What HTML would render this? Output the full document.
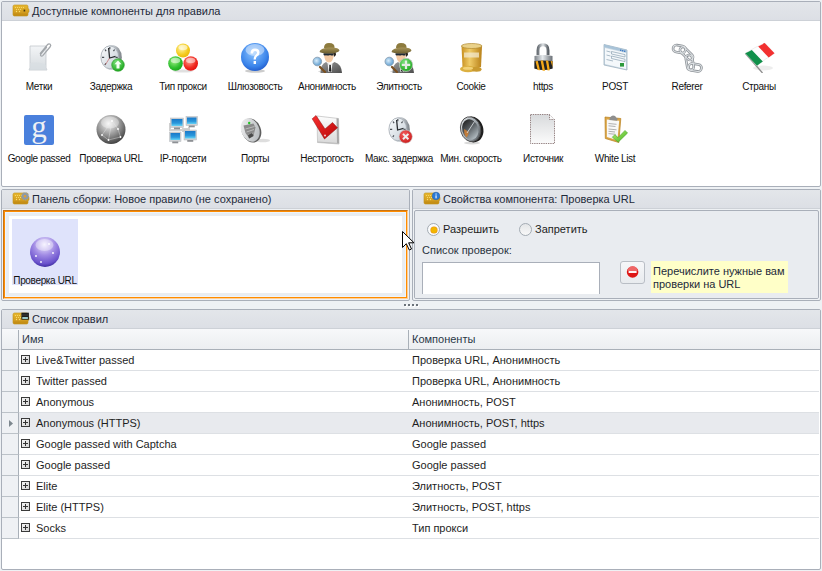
<!DOCTYPE html>
<html><head><meta charset="utf-8">
<style>
*{margin:0;padding:0;box-sizing:border-box}
html,body{width:822px;height:571px;overflow:hidden;background:#eef1f4;font-family:"Liberation Sans",sans-serif;font-size:11px;color:#1e1e1e;position:relative}
.a{position:absolute}
.panel{position:absolute;border:1px solid #a9afb9;border-radius:2px;background:#fff}
.hdr{position:absolute;left:0;right:0;top:0;height:19px;background:linear-gradient(#e3e6ea,#dcdfe5);border-bottom:1px solid #cdd1d7}
.hdr .t{position:absolute;left:30px;top:3px;white-space:nowrap;color:#1e2a3a}
.hdr svg{position:absolute;left:9px;top:0}
.item{position:absolute;width:72px;height:72px}
.item svg{position:absolute;left:20px;top:0}
.item .l{position:absolute;left:-20px;width:112px;text-align:center;top:39.5px;font-size:10px;letter-spacing:-0.35px;white-space:nowrap;color:#111}
.row{position:absolute;left:0;right:1px;height:21px;border-bottom:1px solid #dde0e4;background:#fff}
.row.sel{background:#e8eaee}
.ind{position:absolute;left:0;top:0;width:17px;height:21px;background:#eff1f4;border-right:1px solid #a9b0b8;border-bottom:1px solid #bcc2c8}
.arr{position:absolute;left:6px;top:6px}
.pl{position:absolute;left:19px;top:5px;width:9px;height:9px;border:1px solid #3a3a3a;background:linear-gradient(135deg,#f4f4f4,#d4d4d4)}
.pl:before{content:"";position:absolute;left:1px;top:3px;width:5px;height:1px;background:#333}
.pl:after{content:"";position:absolute;left:3px;top:1px;width:1px;height:5px;background:#333}
.c1{position:absolute;left:34px;top:4px;white-space:nowrap}
.c2{position:absolute;left:410px;top:4px;white-space:nowrap}
.colh{position:absolute;top:19px;left:0;right:0;height:21px;background:linear-gradient(#f7f8fa,#eceef1);border-bottom:1px solid #a9b0b8}
.colh span{position:absolute;top:4px;color:#2a3848;white-space:nowrap}
.radio{position:absolute;width:13px;height:13px;border-radius:50%;border:1px solid #a3abb3;background:#fafbfc}
</style></head><body>

<svg width="0" height="0" style="position:absolute">
<defs>
<linearGradient id="gPaper" x1="0" y1="0" x2="0" y2="1"><stop offset="0" stop-color="#f3f5f7"/><stop offset="1" stop-color="#d5dade"/></linearGradient>
<linearGradient id="gRim" x1="0" y1="0" x2="1" y2="0"><stop offset="0" stop-color="#e8ecef"/><stop offset="0.6" stop-color="#c4c9ce"/><stop offset="1" stop-color="#7c8288"/></linearGradient>
<linearGradient id="gClock" x1="0" y1="0" x2="1" y2="1"><stop offset="0" stop-color="#fafcfd"/><stop offset="1" stop-color="#c5ced6"/></linearGradient>
<radialGradient id="gGreen" cx="0.4" cy="0.3" r="0.8"><stop offset="0" stop-color="#7ee27e"/><stop offset="1" stop-color="#10a010"/></radialGradient>
<radialGradient id="gGreenB" cx="0.4" cy="0.35" r="0.75"><stop offset="0" stop-color="#9aee80"/><stop offset="0.6" stop-color="#30c030"/><stop offset="1" stop-color="#10a010"/></radialGradient>
<radialGradient id="gYellow" cx="0.4" cy="0.35" r="0.75"><stop offset="0" stop-color="#fff4a8"/><stop offset="0.6" stop-color="#f4cc20"/><stop offset="1" stop-color="#eab000"/></radialGradient>
<radialGradient id="gRed" cx="0.4" cy="0.35" r="0.75"><stop offset="0" stop-color="#ff9a8a"/><stop offset="0.6" stop-color="#f02a20"/><stop offset="1" stop-color="#e00808"/></radialGradient>
<radialGradient id="gRedX" cx="0.4" cy="0.35" r="0.75"><stop offset="0" stop-color="#f46060"/><stop offset="1" stop-color="#c81414"/></radialGradient>
<radialGradient id="gBlue" cx="0.45" cy="0.35" r="0.7"><stop offset="0" stop-color="#8cc4ff"/><stop offset="0.7" stop-color="#3a84ea"/><stop offset="1" stop-color="#1e56c8"/></radialGradient>
<radialGradient id="gGray" cx="0.42" cy="0.3" r="0.78"><stop offset="0" stop-color="#f4f4f4"/><stop offset="0.55" stop-color="#8c8c8c"/><stop offset="1" stop-color="#2e2e2e"/></radialGradient>
<radialGradient id="gPurple" cx="0.48" cy="0.25" r="0.8"><stop offset="0" stop-color="#f2eeff"/><stop offset="0.45" stop-color="#a08ae4"/><stop offset="0.8" stop-color="#6a52cc"/><stop offset="1" stop-color="#2a1c8c"/></radialGradient>
<linearGradient id="gSuit" x1="0" y1="0" x2="1" y2="1"><stop offset="0" stop-color="#9a9a9a"/><stop offset="1" stop-color="#4e4e4e"/></linearGradient>
<linearGradient id="gHat" x1="0" y1="0" x2="0" y2="1"><stop offset="0" stop-color="#a8955a"/><stop offset="1" stop-color="#6e6030"/></linearGradient>
<radialGradient id="gLens" cx="0.4" cy="0.4" r="0.7"><stop offset="0" stop-color="#d8ecfa"/><stop offset="1" stop-color="#4a90c8"/></radialGradient>
<linearGradient id="gGold" x1="0" y1="0" x2="1" y2="0"><stop offset="0" stop-color="#c89020"/><stop offset="0.4" stop-color="#f0cc68"/><stop offset="1" stop-color="#b88018"/></linearGradient>
<linearGradient id="gShackle" x1="0" y1="0" x2="1" y2="0"><stop offset="0" stop-color="#6c7278"/><stop offset="0.5" stop-color="#dfe3e6"/><stop offset="1" stop-color="#5c6268"/></linearGradient>
<linearGradient id="gLockBody" x1="0" y1="0" x2="1" y2="0"><stop offset="0" stop-color="#7c8288"/><stop offset="0.45" stop-color="#e6eaed"/><stop offset="1" stop-color="#6a7076"/></linearGradient>
<linearGradient id="gChain" x1="0" y1="0" x2="1" y2="1"><stop offset="0" stop-color="#c8c8c8"/><stop offset="0.5" stop-color="#8a8a8a"/><stop offset="1" stop-color="#b0b0b0"/></linearGradient>
<linearGradient id="gScreen" x1="0" y1="0" x2="0" y2="1"><stop offset="0" stop-color="#1a78c8"/><stop offset="0.6" stop-color="#2a98dc"/><stop offset="1" stop-color="#68d4f6"/></linearGradient>
<linearGradient id="gPort" x1="0" y1="0" x2="1" y2="1"><stop offset="0" stop-color="#f4f4f4"/><stop offset="1" stop-color="#b0b4b8"/></linearGradient>
<linearGradient id="gBox" x1="0" y1="0" x2="0" y2="1"><stop offset="0" stop-color="#fdfdfd"/><stop offset="1" stop-color="#d8d8d8"/></linearGradient>
<linearGradient id="gCheckRed" x1="0" y1="0" x2="1" y2="1"><stop offset="0" stop-color="#f83030"/><stop offset="1" stop-color="#b80808"/></linearGradient>
<linearGradient id="gRing" x1="0" y1="0" x2="1" y2="1"><stop offset="0" stop-color="#e8ecee"/><stop offset="0.6" stop-color="#9aa2a8"/><stop offset="1" stop-color="#3a3e42"/></linearGradient>
<linearGradient id="gGauge" x1="0.3" y1="0" x2="0.7" y2="1"><stop offset="0" stop-color="#222"/><stop offset="0.45" stop-color="#5a6064"/><stop offset="1" stop-color="#b8c2c8"/></linearGradient>
<linearGradient id="gPage" x1="0" y1="0" x2="0" y2="1"><stop offset="0" stop-color="#d8dadc"/><stop offset="1" stop-color="#fbfbfb"/></linearGradient>
<linearGradient id="gGreenChk" x1="0" y1="0" x2="1" y2="1"><stop offset="0" stop-color="#b8f070"/><stop offset="1" stop-color="#40b020"/></linearGradient>
<linearGradient id="gWallet" x1="0" y1="0" x2="0" y2="1"><stop offset="0" stop-color="#e8b830"/><stop offset="1" stop-color="#c89018"/></linearGradient>
</defs></svg>

<!-- top panel -->
<div class="panel" style="left:1px;top:1px;width:820px;height:186px">
  <div class="hdr"><svg width="20" height="15" viewBox="0 0 20 15"><path d="M2 4.5 Q2 3 3.5 3 H15.5 Q17 3 17 4.5 V6.5 Q18 6.5 18 8 V9.5 Q18 10.5 17 10.5 V12.5 Q17 14 15.5 14 H3.5 Q2 14 2 12.5Z" fill="url(#gWallet)" stroke="#c09018" stroke-width="0.6"/><path d="M2.5 11.5 H16.5 V12.5 Q16.5 13.5 15.5 13.5 H3.5 Q2.5 13.5 2.5 12.5Z" fill="#c08a10" opacity="0.6"/><g fill="#fbe070"><circle cx="4.5" cy="5.5" r="0.6"/><circle cx="6.5" cy="5.5" r="0.6"/><circle cx="8.5" cy="5.5" r="0.6"/><circle cx="10.5" cy="5.5" r="0.6"/><circle cx="12.5" cy="5.5" r="0.6"/><circle cx="5.5" cy="7.5" r="0.6"/><circle cx="7.5" cy="7.5" r="0.6"/><circle cx="9.5" cy="7.5" r="0.6"/><circle cx="5.5" cy="9.5" r="0.7"/><circle cx="8.5" cy="9.5" r="0.7"/></g><rect x="12.6" y="7.6" width="1.6" height="1.9" fill="#4a3a10"/></svg><span class="t">Доступные компоненты для правила</span></div>
  <div class="item" style="left:1px;top:39px"><svg width="32" height="32" viewBox="0 0 32 32">
<path d="M7 5 H23 V27 L24 29 H6 L7 27 Z" fill="url(#gPaper)" stroke="#c3c8cd" stroke-width="0.8"/>
<path d="M7 22 Q15 20 23 24 V27 L24 29 H6 L7 27Z" fill="#d9dee3" opacity="0.7"/>
<path d="M17.3 12.5 L24.3 3.8 Q25.8 2.2 27.2 3.2 Q28.4 4.3 27 6 L20 14.3 Q18.8 15.6 17.8 14.8 Q17 14 18.2 12.6 L23.6 6.2" fill="none" stroke="#a2a6aa" stroke-width="1.25" stroke-linecap="round"/>
</svg><span class="l">Метки</span></div>
<div class="item" style="left:73px;top:39px"><svg width="32" height="32" viewBox="0 0 32 32">
<ellipse cx="16.8" cy="16.5" rx="10" ry="12.6" fill="url(#gRim)"/>
<ellipse cx="14.8" cy="16.3" rx="8.9" ry="11.4" fill="url(#gClock)" stroke="#a4abb2" stroke-width="0.8"/>
<g stroke="#4a4f55" stroke-width="1.2"><path d="M14.8 6v2.3M7 16.3h2.2M20.5 16.3h2.2M10 8.5l1.1 1.7M19.6 8.5l-1.1 1.7M9.8 24l1.1-1.6"/></g>
<path d="M13.6 7 L14.6 17 L20.5 15.3" fill="none" stroke="#2a2d31" stroke-width="1.3"/>
<path d="M10.5 23.5 L14.6 17" stroke="#c05050" stroke-width="0.6"/>
<circle cx="23" cy="24" r="6.3" fill="url(#gGreen)" stroke="#2a9a2a" stroke-width="0.6"/>
<path d="M23 19.5 L26.5 23.2 H24.5 V27.5 H21.5 V23.2 H19.5Z" fill="#f4fff4"/>
</svg><span class="l">Задержка</span></div>
<div class="item" style="left:145px;top:39px"><svg width="32" height="32" viewBox="0 0 32 32">
<ellipse cx="16" cy="30" rx="10" ry="1.6" fill="#000" opacity="0.12"/>
<circle cx="16" cy="9.5" r="7" fill="url(#gYellow)"/>
<circle cx="8.5" cy="22.5" r="7.3" fill="url(#gGreenB)"/>
<circle cx="23.7" cy="22.5" r="7.3" fill="url(#gRed)"/>
<ellipse cx="16" cy="6.5" rx="4.5" ry="2.8" fill="#fff" opacity="0.55"/>
<ellipse cx="8.5" cy="19.5" rx="4.7" ry="2.8" fill="#fff" opacity="0.5"/>
<ellipse cx="23.7" cy="19.5" rx="4.7" ry="2.8" fill="#fff" opacity="0.5"/>
</svg><span class="l">Тип прокси</span></div>
<div class="item" style="left:217px;top:39px"><svg width="32" height="32" viewBox="0 0 32 32">
<ellipse cx="16" cy="30" rx="10" ry="1.8" fill="#000" opacity="0.2"/>
<circle cx="16" cy="16" r="14" fill="url(#gBlue)"/>
<ellipse cx="16" cy="9" rx="9.5" ry="6" fill="#fff" opacity="0.45"/>
<path d="M11.5 12.5 Q11.5 7.5 16 7.5 Q20.5 7.5 20.5 11.5 Q20.5 14 18 15.5 Q16.8 16.3 16.8 18.5 H14.6 Q14.4 15.5 16.5 14 Q18 13 18 11.6 Q18 10 16 10 Q14 10 14 12.5Z" fill="#fff"/>
<rect x="14.6" y="20" width="2.4" height="3" fill="#fff"/>
</svg><span class="l">Шлюзовость</span></div>
<div class="item" style="left:289px;top:39px"><svg width="32" height="32" viewBox="0 0 32 32">
<ellipse cx="19" cy="30.5" rx="12" ry="1.5" fill="#000" opacity="0.15"/>
<path d="M9.5 32 Q9.5 23 15 21 L19 24 L23.5 21 Q30.5 23 31 32Z" fill="url(#gSuit)"/>
<path d="M16.5 21.5 L19 25 L21.5 21.5 L20.5 31 H17.5Z" fill="#f4f4f4"/>
<path d="M18.4 24 H19.8 L20.3 30 L19.1 31 L18 30Z" fill="#222"/>
<path d="M13 11.5 Q13 21.5 18 21.5 Q22.5 21.5 23 12Z" fill="#f3c9a3"/>
<path d="M21 9 Q25 9 25 14 L23 16 Q23 12 21 11Z" fill="#2a241e"/>
<path d="M12.5 12.3 H22.5 V14.2 Q21 15 19 14 Q17 15 15 14.2 Q13 15 12.5 13.8Z" fill="#1e2a35"/>
<path d="M13 7 Q13 2 18 2 Q24 2 23.5 7Z" fill="#8d7b3e"/>
<path d="M8.5 11 Q9 7 18 6.5 Q28 6 28.5 9.5 Q27 12.5 18 12.3 Q10 12.2 8.5 11Z" fill="url(#gHat)"/>
<path d="M9 26 L14 31" stroke="#7a5020" stroke-width="2.2" stroke-linecap="round"/>
<circle cx="6.3" cy="20.5" r="4.3" fill="url(#gLens)" stroke="#8aa0b4" stroke-width="0.9"/>
</svg><span class="l">Анонимность</span></div>
<div class="item" style="left:361px;top:39px"><svg width="32" height="32" viewBox="0 0 32 32">
<ellipse cx="19" cy="30.5" rx="12" ry="1.5" fill="#000" opacity="0.15"/>
<path d="M9.5 32 Q9.5 23 15 21 L19 24 L23.5 21 Q30.5 23 31 32Z" fill="url(#gSuit)"/>
<path d="M16.5 21.5 L19 25 L21.5 21.5 L20.5 31 H17.5Z" fill="#f4f4f4"/>
<path d="M18.4 24 H19.8 L20.3 30 L19.1 31 L18 30Z" fill="#222"/>
<path d="M13 11.5 Q13 21.5 18 21.5 Q22.5 21.5 23 12Z" fill="#f3c9a3"/>
<path d="M21 9 Q25 9 25 14 L23 16 Q23 12 21 11Z" fill="#2a241e"/>
<path d="M12.5 12.3 H22.5 V14.2 Q21 15 19 14 Q17 15 15 14.2 Q13 15 12.5 13.8Z" fill="#1e2a35"/>
<path d="M13 7 Q13 2 18 2 Q24 2 23.5 7Z" fill="#8d7b3e"/>
<path d="M8.5 11 Q9 7 18 6.5 Q28 6 28.5 9.5 Q27 12.5 18 12.3 Q10 12.2 8.5 11Z" fill="url(#gHat)"/>
<path d="M9 26 L14 31" stroke="#7a5020" stroke-width="2.2" stroke-linecap="round"/>
<circle cx="6.3" cy="20.5" r="4.3" fill="url(#gLens)" stroke="#8aa0b4" stroke-width="0.9"/>

<circle cx="23" cy="23.8" r="6.6" fill="url(#gGreen)" stroke="#b8c4b8" stroke-width="0.9"/>
<path d="M21.9 19.6h2.2v3.1h3.1v2.2h-3.1v3.1h-2.2v-3.1h-3.1v-2.2h3.1z" fill="#e4ece4"/>
</svg><span class="l">Элитность</span></div>
<div class="item" style="left:433px;top:39px"><svg width="32" height="32" viewBox="0 0 32 32">
<path d="M6.5 5 Q16.5 2 27 5 L26 26 Q16.5 28 7.5 26Z" fill="url(#gGold)"/>
<ellipse cx="16.7" cy="5" rx="10.3" ry="2.5" fill="#e9d18a" stroke="#b08a30" stroke-width="0.7"/>
<rect x="9" y="11.5" width="15" height="5" fill="#f3ead0" opacity="0.75"/>
<ellipse cx="13" cy="28" rx="8" ry="3.2" fill="#dcb040"/>
<ellipse cx="21.5" cy="28.3" rx="5" ry="2.5" fill="#c99a30"/>
<ellipse cx="13" cy="27.2" rx="5" ry="1.5" fill="#f2d278"/>
</svg><span class="l">Cookie</span></div>
<div class="item" style="left:505px;top:39px"><svg width="32" height="32" viewBox="0 0 32 32">
<path d="M11 14 V9.5 Q11 3.8 16 3.8 Q21 3.8 21 9.5 V14" fill="none" stroke="url(#gShackle)" stroke-width="3"/>
<path d="M7.5 15 Q16 13 25.5 15 L25.5 27.5 Q16 30.5 7.5 27.5Z" fill="url(#gLockBody)"/>
<path d="M7.5 20 Q16 18.8 25.5 20 L25.5 27.5 Q16 30.5 7.5 27.5Z" fill="#222"/>
<g fill="#f4a818"><path d="M8.5 20.2 L10.8 20 L13 29.2 L10.7 28.9Z"/><path d="M13.6 19.6 L16 19.5 L18 29.8 L15.6 29.8Z"/><path d="M18.8 19.6 L21.2 19.8 L22.8 29.2 L20.6 29.5Z"/><path d="M23.6 20 L25.5 20.2 V26 Z"/></g>
</svg><span class="l">https</span></div>
<div class="item" style="left:577px;top:39px"><svg width="32" height="32" viewBox="0 0 32 32">
<path d="M5 3.5 L28 9 V29 L5 24Z" fill="#c9d8e3" stroke="#9fb2c0" stroke-width="0.8"/>
<path d="M6 7 L27 12 V28 L6 23Z" fill="#f4f8fb"/>
<path d="M5 3.5 L28 9 V11.5 L5 6Z" fill="#a8c3d8"/>
<g fill="#3a78c8"><rect x="21" y="8.6" width="1.3" height="1.3"/><rect x="23" y="9.1" width="1.3" height="1.3"/><rect x="25" y="9.6" width="1.3" height="1.3"/></g>
<g stroke="#8aa0b0" stroke-width="0.7" fill="none"><path d="M7.5 10 L11.5 11"/><path d="M7.5 14 L11.5 15"/><path d="M7.5 18.5 L14 20"/><path d="M12.5 10.5 L26 13.6 V16 L12.5 13Z"/><path d="M12.5 15 L26 18.2 V20.6 L12.5 17.5Z"/></g>
<rect x="21" y="22" width="4" height="3.6" fill="#2c9a3c"/>
</svg><span class="l">POST</span></div>
<div class="item" style="left:649px;top:39px"><svg width="32" height="32" viewBox="0 0 32 32">
<g fill="none" stroke="#8e9398" stroke-width="2.6"><rect x="2" y="4.5" width="12.5" height="7" rx="3.5" transform="rotate(10 8 8)"/><rect x="7.5" y="9.5" width="16" height="6" rx="3" transform="rotate(45 15.5 12.5)"/><rect x="15.5" y="14" width="6.5" height="15" rx="3.2" transform="rotate(-10 18.7 21.5)"/><rect x="17.5" y="23" width="13" height="7" rx="3.5" transform="rotate(8 24 26.5)"/></g>
<g fill="none" stroke="#dde1e4" stroke-width="1"><rect x="2" y="4.5" width="12.5" height="7" rx="3.5" transform="rotate(10 8 8)"/><rect x="7.5" y="9.5" width="16" height="6" rx="3" transform="rotate(45 15.5 12.5)"/><rect x="15.5" y="14" width="6.5" height="15" rx="3.2" transform="rotate(-10 18.7 21.5)"/><rect x="17.5" y="23" width="13" height="7" rx="3.5" transform="rotate(8 24 26.5)"/></g>
</svg><span class="l">Referer</span></div>
<div class="item" style="left:721px;top:39px"><svg width="32" height="32" viewBox="0 0 32 32">
<ellipse cx="20" cy="27" rx="10" ry="2.5" fill="#000" opacity="0.07"/>
<path d="M2.3 12.3 L19.5 32" stroke="#8d8d8d" stroke-width="1.3"/>
<path d="M2.3 12.3 Q12 6 21.7 2.1 L31.5 12.3 Q22 18 14 24.7Z" fill="#fdfdfd" stroke="#dcdcdc" stroke-width="0.5"/>
<path d="M2.3 12.3 Q5.5 10.5 8.8 8.9 L19.8 20.6 Q17 22.5 14 24.7Z" fill="#10904a"/>
<path d="M15.2 5.5 Q18.5 3.5 21.7 2.1 L31.5 12.3 Q28.5 14.5 25.7 16.4Z" fill="#f23030"/>
</svg><span class="l">Страны</span></div>
<div class="item" style="left:1px;top:111px"><svg width="32" height="32" viewBox="0 0 32 32">
<rect x="1" y="2" width="30" height="30" rx="2" fill="#4a80dc"/>
<text x="16" y="24" text-anchor="middle" font-family="Liberation Serif" font-size="31" fill="#eef0f4">g</text>
</svg><span class="l">Google passed</span></div>
<div class="item" style="left:73px;top:111px"><svg width="32" height="32" viewBox="0 0 32 32">
<circle cx="16" cy="16.5" r="14.5" fill="url(#gGray)"/>
<ellipse cx="15" cy="9.5" rx="9" ry="6" fill="#fff" opacity="0.35"/>
<g stroke="#e8e8e8" stroke-width="0.5" fill="none" opacity="0.8"><path d="M7 22 L17 8 L23 16 L25.5 24 L13.5 27Z M17 8 L13.5 27"/></g>
<g fill="#fff"><circle cx="7" cy="22" r="0.9"/><circle cx="17" cy="8" r="0.9"/><circle cx="23" cy="16" r="0.9"/><circle cx="25.5" cy="24" r="0.9"/><circle cx="13.5" cy="27" r="0.9"/></g>
</svg><span class="l">Проверка URL</span></div>
<div class="item" style="left:145px;top:111px"><svg width="32" height="32" viewBox="0 0 32 32"><path d="M3 10 V17 H16 M16 19 V16 H22 V14" stroke="#d0d0d0" stroke-width="2" fill="none"/><rect x="3.5" y="5" width="13" height="9.5" fill="#cfd2d5" stroke="#b4b8bc" stroke-width="0.5"/><rect x="4.5" y="6" width="11" height="7.0" fill="url(#gScreen)"/><rect x="7.0" y="14.5" width="6" height="1.8" fill="#8d9094"/><rect x="19" y="3.5" width="11.5" height="9" fill="#cfd2d5" stroke="#b4b8bc" stroke-width="0.5"/><rect x="20" y="4.5" width="9.5" height="6.5" fill="url(#gScreen)"/><rect x="21.75" y="12.5" width="6" height="1.8" fill="#8d9094"/><rect x="2.5" y="19" width="11.5" height="9.5" fill="#cfd2d5" stroke="#b4b8bc" stroke-width="0.5"/><rect x="3.5" y="20" width="9.5" height="7.0" fill="url(#gScreen)"/><rect x="5.25" y="28.5" width="6" height="1.8" fill="#8d9094"/><rect x="17" y="17" width="12.5" height="10" fill="#cfd2d5" stroke="#b4b8bc" stroke-width="0.5"/><rect x="18" y="18" width="10.5" height="7.5" fill="url(#gScreen)"/><rect x="20.25" y="27" width="6" height="1.8" fill="#8d9094"/></svg><span class="l">IP-подсети</span></div>
<div class="item" style="left:217px;top:111px"><svg width="32" height="32" viewBox="0 0 32 32">
<ellipse cx="24" cy="27.5" rx="7" ry="1.8" fill="#000" opacity="0.13"/>
<ellipse cx="12.3" cy="17.5" rx="9.6" ry="12.4" transform="rotate(-22 12.3 17.5)" fill="#5e5e5e"/>
<ellipse cx="11.2" cy="17" rx="9" ry="12" transform="rotate(-22 11.2 17)" fill="url(#gPort)"/>
<path d="M4.5 12.5 L14.5 10.5 L16.5 14.5 L14.5 23 L10.5 25.5 L6.5 20Z" fill="#8a8a8a"/>
<path d="M6.5 16 L15.5 13.5 M7.5 19 L15 16.5 M9 22 L14.5 20" stroke="#c6c6c6" stroke-width="0.8"/>
<path d="M10 25.5 L14.5 23 L13 20 L9 22Z" fill="#4a4a4a"/>
<circle cx="10.2" cy="10" r="1.2" fill="#22c422"/>
</svg><span class="l">Порты</span></div>
<div class="item" style="left:289px;top:111px"><svg width="32" height="32" viewBox="0 0 32 32">
<path d="M6 3 L27.5 5.5 L28 31 L6.5 29.5Z" fill="url(#gBox)" stroke="#c4c4c4" stroke-width="0.8"/>
<path d="M25.5 5.3 L27.5 5.5 L28 31 L26 30.8Z" fill="#a8a8a8"/>
<path d="M6.5 28.5 L28 30 V31 L6.5 29.5Z" fill="#bcbcbc"/>
<path d="M1.2 5.8 L5 2.5 L14 16 L21.5 9.5 L26.5 14.8 L13.5 26Z" fill="url(#gCheckRed)" stroke="#8a0a0a" stroke-width="0.5"/>
<circle cx="14" cy="22.5" r="1.1" fill="#fff" opacity="0.75"/>
</svg><span class="l">Нестрогость</span></div>
<div class="item" style="left:361px;top:111px"><svg width="32" height="32" viewBox="0 0 32 32">
<ellipse cx="16.8" cy="16.5" rx="10" ry="12.6" fill="url(#gRim)"/>
<ellipse cx="14.8" cy="16.3" rx="8.9" ry="11.4" fill="url(#gClock)" stroke="#a4abb2" stroke-width="0.8"/>
<g stroke="#4a4f55" stroke-width="1.2"><path d="M14.8 6v2.3M7 16.3h2.2M20.5 16.3h2.2M10 8.5l1.1 1.7M19.6 8.5l-1.1 1.7M9.8 24l1.1-1.6"/></g>
<path d="M13.6 7 L14.6 17 L20.5 15.3" fill="none" stroke="#2a2d31" stroke-width="1.3"/>
<circle cx="22.7" cy="23.6" r="6.6" fill="url(#gRedX)" stroke="#c8c8c8" stroke-width="0.6"/>
<path d="M20 20.9 L25.4 26.3 M25.4 20.9 L20 26.3" stroke="#eee" stroke-width="2"/>
</svg><span class="l">Макс. задержка</span></div>
<div class="item" style="left:433px;top:111px"><svg width="32" height="32" viewBox="0 0 32 32">
<ellipse cx="17" cy="30" rx="8" ry="1.5" fill="#000" opacity="0.15"/>
<ellipse cx="17.5" cy="16.5" rx="10.8" ry="13" transform="rotate(-15 17.5 16.5)" fill="#1e1e1e"/>
<ellipse cx="15.6" cy="16.2" rx="10" ry="12.6" transform="rotate(-15 15.6 16.2)" fill="url(#gRing)" stroke="#505050" stroke-width="0.9"/>
<ellipse cx="15.2" cy="16.5" rx="8" ry="10.4" transform="rotate(-15 15.2 16.5)" fill="url(#gGauge)"/>
<path d="M9.2 16 Q8.5 21 11.5 24.5 Q13.5 23 13.8 19Z" fill="#d8802c" opacity="0.8"/>
<path d="M12 20 L19.5 8.5" stroke="#dfe4e8" stroke-width="0.8"/>
</svg><span class="l">Мин. скорость</span></div>
<div class="item" style="left:505px;top:111px"><svg width="32" height="32" viewBox="0 0 32 32">
<path d="M3.5 1.5 H22.5 L27.5 6.5 V30.5 H3.5Z" fill="url(#gPage)" stroke="#8a7676" stroke-width="0.9" stroke-dasharray="1.4 0.9"/>
<path d="M22.5 1.5 V6.5 H27.5" fill="#fafafa" stroke="#8a7676" stroke-width="0.9" stroke-dasharray="1.4 0.9"/>
</svg><span class="l">Источник</span></div>
<div class="item" style="left:577px;top:111px"><svg width="32" height="32" viewBox="0 0 32 32">
<path d="M6 4 L21.8 5.5 L19.8 29.5 L6.3 25.5Z" fill="#dba545" stroke="#b8801e" stroke-width="0.7"/>
<path d="M7.8 6.6 L20.2 7.7 L18.4 27.3 L7.9 24Z" fill="#f8f8f8"/>
<g stroke="#9c9c9c" stroke-width="0.8"><path d="M9.5 10.5 L17.5 11.3 M9.5 12.8 L16.5 13.5 M9.5 16 L17.5 16.8 M9.5 18.3 L16 19 M9.5 20.6 L16.5 21.3"/></g>
<path d="M10.5 6.2 Q11 3 14 2.5 Q16.8 2.6 17.2 4.8 L18.6 5.2 L18.2 7.8 L10.3 7Z" fill="#8e8e8e"/>
<path d="M13.3 24.2 L15.9 21.6 L19 24.6 L26 17.4 L28.6 20 L19.2 29.2Z" fill="url(#gGreenChk)" stroke="#3a9a20" stroke-width="0.5"/>
</svg><span class="l">White List</span></div>
</div>

<!-- build panel -->
<div class="panel" style="left:1px;top:189px;width:409px;height:112px;background:#eef1f4">
  <div class="hdr"><svg width="20" height="15" viewBox="0 0 20 15"><path d="M2 4.5 Q2 3 3.5 3 H15.5 Q17 3 17 4.5 V6.5 Q18 6.5 18 8 V9.5 Q18 10.5 17 10.5 V12.5 Q17 14 15.5 14 H3.5 Q2 14 2 12.5Z" fill="url(#gWallet)" stroke="#c09018" stroke-width="0.6"/><path d="M2.5 11.5 H16.5 V12.5 Q16.5 13.5 15.5 13.5 H3.5 Q2.5 13.5 2.5 12.5Z" fill="#c08a10" opacity="0.6"/><g fill="#fbe070"><circle cx="4.5" cy="5.5" r="0.6"/><circle cx="6.5" cy="5.5" r="0.6"/><circle cx="8.5" cy="5.5" r="0.6"/><circle cx="10.5" cy="5.5" r="0.6"/><circle cx="12.5" cy="5.5" r="0.6"/><circle cx="5.5" cy="7.5" r="0.6"/><circle cx="7.5" cy="7.5" r="0.6"/><circle cx="9.5" cy="7.5" r="0.6"/><circle cx="5.5" cy="9.5" r="0.7"/><circle cx="8.5" cy="9.5" r="0.7"/></g><circle cx="14" cy="6.3" r="3.2" fill="#8e9aa6" stroke="#8e9aa6" stroke-width="1.8" stroke-dasharray="1 0.9"/><circle cx="14" cy="6.3" r="2.6" fill="#8e9aa6"/><circle cx="14" cy="6.3" r="1.2" fill="#e0a030"/></svg><span class="t">Панель сборки: Новое правило (не сохранено)</span></div>
  <div class="a" style="left:1px;top:20px;width:405px;height:89px;border-style:solid;border-width:1px;border-color:#c87414 #ffcf96 #ffcf96 #c87414;background:#e9edf1"><div class="a" style="left:0;top:0;right:0;bottom:0;border:1px solid #ff8c00"><div class="a" style="left:0;top:0;right:0;bottom:0;border:1px solid #eef5fb"></div></div></div>
  <div class="a" style="left:7px;top:26px;width:393px;height:77px;background:#fff"></div>
  <div class="a" style="left:10px;top:29px;width:66px;height:66px;background:#dfe3fb"></div>
  <div class="a" style="left:27px;top:46px"><svg width="32" height="32" viewBox="0 0 32 32"><circle cx="16" cy="16" r="15" fill="url(#gPurple)"/><ellipse cx="15.5" cy="9" rx="9" ry="6" fill="#fff" opacity="0.35"/><g fill="#fff"><circle cx="7" cy="20" r="0.9"/><circle cx="20" cy="8" r="0.9"/><circle cx="24" cy="17" r="0.9"/><circle cx="12" cy="26" r="0.9"/></g></svg></div>
  <span class="a" style="left:0;width:86px;text-align:center;top:84.5px;font-size:10px;letter-spacing:-0.35px;color:#111;white-space:nowrap">Проверка URL</span>
</div>

<!-- properties panel -->
<div class="panel" style="left:412px;top:189px;width:409px;height:112px;background:#eef1f4">
  <div class="hdr"><svg width="20" height="15" viewBox="0 0 20 15"><path d="M2 4.5 Q2 3 3.5 3 H15.5 Q17 3 17 4.5 V6.5 Q18 6.5 18 8 V9.5 Q18 10.5 17 10.5 V12.5 Q17 14 15.5 14 H3.5 Q2 14 2 12.5Z" fill="url(#gWallet)" stroke="#c09018" stroke-width="0.6"/><path d="M2.5 11.5 H16.5 V12.5 Q16.5 13.5 15.5 13.5 H3.5 Q2.5 13.5 2.5 12.5Z" fill="#c08a10" opacity="0.6"/><g fill="#fbe070"><circle cx="4.5" cy="5.5" r="0.6"/><circle cx="6.5" cy="5.5" r="0.6"/><circle cx="8.5" cy="5.5" r="0.6"/><circle cx="10.5" cy="5.5" r="0.6"/><circle cx="12.5" cy="5.5" r="0.6"/><circle cx="5.5" cy="7.5" r="0.6"/><circle cx="7.5" cy="7.5" r="0.6"/><circle cx="9.5" cy="7.5" r="0.6"/><circle cx="5.5" cy="9.5" r="0.7"/><circle cx="8.5" cy="9.5" r="0.7"/></g><circle cx="14" cy="6" r="3.8" fill="#2a7ad8" stroke="#1a5ab0" stroke-width="0.5"/><rect x="13.5" y="5.3" width="1.1" height="3" fill="#fff"/><rect x="13.5" y="3.5" width="1.1" height="1.1" fill="#fff"/></svg><span class="t">Свойства компонента: Проверка URL</span></div>
  <div class="a" style="left:1px;top:20px;width:405px;height:89px;border:1px solid #a9afb9;border-radius:2px;background:#e9ecf0;overflow:hidden">
    <div class="radio" style="left:12px;top:12px"><div class="a" style="left:2.5px;top:2.5px;width:6px;height:6px;border-radius:50%;background:#f2b600;box-shadow:0 0 0 0.6px #e8901a"></div></div>
    <span class="a" style="left:28px;top:12px">Разрешить</span>
    <div class="radio" style="left:104px;top:12px;background:linear-gradient(#e4e6e8,#f8f8f8)"></div>
    <span class="a" style="left:120px;top:12px">Запретить</span>
    <span class="a" style="left:7px;top:33px;color:#2a3440">Список проверок:</span>
    <div class="a" style="left:7px;top:51px;width:178px;height:40px;border:1px solid #a9afb9;background:#fff"></div>
    <div class="a" style="left:0;top:83px;width:405px;height:10px;background:#e9ecf0"></div>
    <div class="a" style="left:205px;top:50px;width:25px;height:23px;border:1px solid #b9bec5;border-radius:3px;background:linear-gradient(#f6f7f9,#e8ebee)">
      <svg class="a" style="left:5px;top:3px" width="14" height="14" viewBox="0 0 14 14"><circle cx="6.6" cy="7" r="5.8" fill="#de1616"/><path d="M1.5 6 Q2 1.5 6.6 1.3 Q11.2 1.5 11.7 6Z" fill="#f27a7a" opacity="0.8"/><rect x="2.6" y="6" width="8" height="2" fill="#fff" opacity="0.95"/></svg>
    </div>
    <div class="a" style="left:236px;top:50px;width:137px;height:32px;background:#ffffc8"></div>
    <span class="a" style="left:238px;top:54px;line-height:13px;white-space:nowrap;color:#1e2a3a">Перечислите нужные вам<br>проверки на URL</span>
  </div>
</div>

<!-- splitter dots -->
<div class="a" style="left:404px;top:304px;width:2px;height:2px;background:#6b727a;box-shadow:1px 1px 0 #fff"></div>
<div class="a" style="left:408px;top:304px;width:2px;height:2px;background:#6b727a;box-shadow:1px 1px 0 #fff"></div>
<div class="a" style="left:412px;top:304px;width:2px;height:2px;background:#6b727a;box-shadow:1px 1px 0 #fff"></div>
<div class="a" style="left:416px;top:304px;width:2px;height:2px;background:#6b727a;box-shadow:1px 1px 0 #fff"></div>

<!-- list panel -->
<div class="panel" style="left:1px;top:309px;width:820px;height:261px">
  <div class="hdr"><svg width="20" height="15" viewBox="0 0 20 15"><path d="M2 4.5 Q2 3 3.5 3 H15.5 Q17 3 17 4.5 V6.5 Q18 6.5 18 8 V9.5 Q18 10.5 17 10.5 V12.5 Q17 14 15.5 14 H3.5 Q2 14 2 12.5Z" fill="url(#gWallet)" stroke="#c09018" stroke-width="0.6"/><path d="M2.5 11.5 H16.5 V12.5 Q16.5 13.5 15.5 13.5 H3.5 Q2.5 13.5 2.5 12.5Z" fill="#c08a10" opacity="0.6"/><g fill="#fbe070"><circle cx="4.5" cy="5.5" r="0.6"/><circle cx="6.5" cy="5.5" r="0.6"/><circle cx="8.5" cy="5.5" r="0.6"/><circle cx="10.5" cy="5.5" r="0.6"/><circle cx="12.5" cy="5.5" r="0.6"/><circle cx="5.5" cy="7.5" r="0.6"/><circle cx="7.5" cy="7.5" r="0.6"/><circle cx="9.5" cy="7.5" r="0.6"/><circle cx="5.5" cy="9.5" r="0.7"/><circle cx="8.5" cy="9.5" r="0.7"/></g><rect x="10.4" y="2.7" width="7.5" height="7" fill="#1e1e1e"/><rect x="11.3" y="7" width="5.6" height="2" fill="#9ac8c8"/><g fill="#666"><rect x="11.5" y="4.5" width="1" height="1"/><rect x="13.5" y="4.5" width="1" height="1"/><rect x="15.5" y="4.5" width="1" height="1"/></g></svg><span class="t">Список правил</span></div>
  <div class="colh">
    <div class="a" style="left:16px;top:1px;width:1px;height:20px;background:#a9b0b8"></div>
    <div class="a" style="left:406px;top:1px;width:1px;height:20px;background:#a9b0b8"></div>
    <span style="left:20px">Имя</span>
    <span style="left:410px">Компоненты</span>
  </div>
  <div class="row" style="top:40px"><div class="ind"></div><div class="pl"></div><span class="c1">Live&amp;Twitter passed</span><span class="c2">Проверка URL, Анонимность</span></div>
<div class="row" style="top:61px"><div class="ind"></div><div class="pl"></div><span class="c1">Twitter passed</span><span class="c2">Проверка URL, Анонимность</span></div>
<div class="row" style="top:82px"><div class="ind"></div><div class="pl"></div><span class="c1">Anonymous</span><span class="c2">Анонимность, POST</span></div>
<div class="row sel" style="top:103px"><div class="ind"><svg class="arr" width="6" height="9" viewBox="0 0 6 9"><path d="M1 1 L5 4.5 L1 8Z" fill="#7d878e"/></svg></div><div class="pl"></div><span class="c1">Anonymous (HTTPS)</span><span class="c2">Анонимность, POST, https</span></div>
<div class="row" style="top:124px"><div class="ind"></div><div class="pl"></div><span class="c1">Google passed with Captcha</span><span class="c2">Google passed</span></div>
<div class="row" style="top:145px"><div class="ind"></div><div class="pl"></div><span class="c1">Google passed</span><span class="c2">Google passed</span></div>
<div class="row" style="top:166px"><div class="ind"></div><div class="pl"></div><span class="c1">Elite</span><span class="c2">Элитность, POST</span></div>
<div class="row" style="top:187px"><div class="ind"></div><div class="pl"></div><span class="c1">Elite (HTTPS)</span><span class="c2">Элитность, POST, https</span></div>
<div class="row" style="top:208px"><div class="ind"></div><div class="pl"></div><span class="c1">Socks</span><span class="c2">Тип прокси</span></div>
</div>

<!-- cursor -->
<svg class="a" style="left:401px;top:230px" width="15" height="22" viewBox="0 0 15 22"><path d="M1.5 1.5 V17.5 L5.3 13.7 L8.3 20 L10.5 19 L7.6 12.8 H13Z" fill="#fff" stroke="#000" stroke-width="1" stroke-linejoin="miter"/></svg>
</body></html>
